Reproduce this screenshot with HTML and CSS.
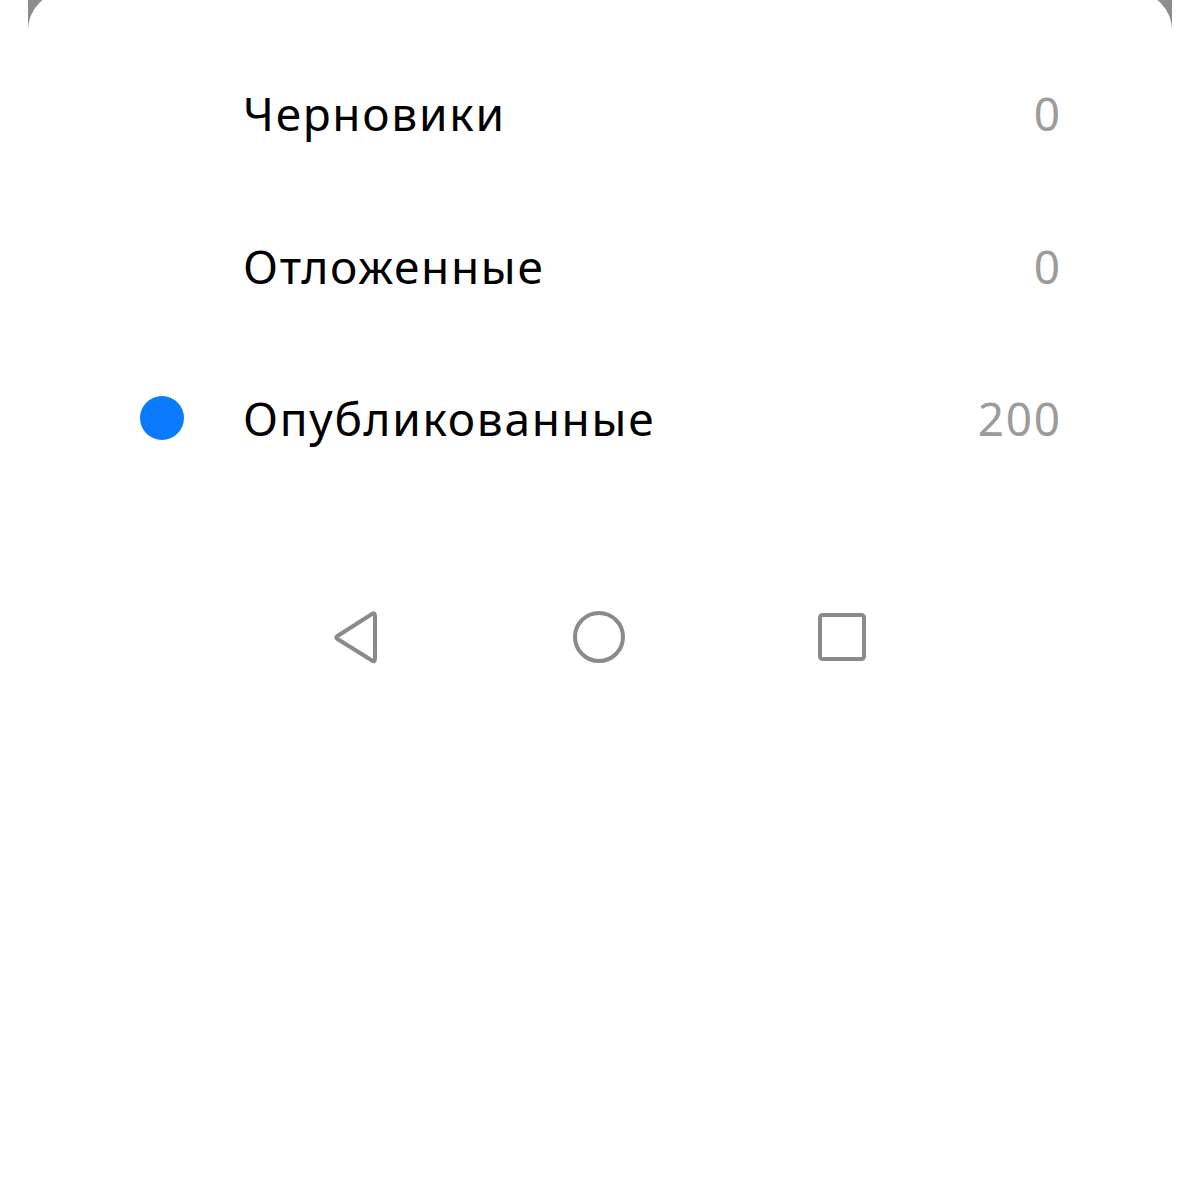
FILE: index.html
```html
<!DOCTYPE html>
<html lang="ru">
<head>
<meta charset="utf-8">
<link rel="stylesheet" href="styles.css">
</head>
<body>
<div class="frame">
  <div class="sheet">
    <ul class="list">
      <li class="row"><span class="mark"></span><span class="label">Черновики</span><span class="count">0</span></li>
      <li class="row"><span class="mark"></span><span class="label">Отложенные</span><span class="count">0</span></li>
      <li class="row"><span class="mark active"></span><span class="label">Опубликованные</span><span class="count">200</span></li>
    </ul>
    <nav class="navbar">
      <svg class="nav-icon" viewBox="0 0 60 60" width="60" height="60"><path d="M49 9 L49 52 Q49 55.5 46 53.5 L11.5 32 Q9 30.5 11.5 29 L46 7 Q49 5 49 9 Z" fill="none" stroke="#8a8a8a" stroke-width="4" stroke-linejoin="round"/></svg>
      <svg class="nav-icon" viewBox="0 0 60 60" width="60" height="60"><circle cx="30" cy="30" r="24" fill="none" stroke="#8a8a8a" stroke-width="4"/></svg>
      <svg class="nav-icon" viewBox="0 0 60 60" width="60" height="60"><rect x="8" y="8" width="44" height="44" rx="2.5" fill="none" stroke="#8a8a8a" stroke-width="4"/></svg>
    </nav>
  </div>
</div>
</body>
</html>
```
FILE: styles.css
```css
html, body {
  margin: 0;
  padding: 0;
  background: #ffffff;
}
body {
  font-family: "Noto Sans", "Open Sans", sans-serif;
}
.frame {
  margin: 0 28px;
  height: 1200px;
  background: #8e8e8e;
  overflow: hidden;
}
.sheet {
  margin-top: -8px;
  height: 1208px;
  background: #ffffff;
  border-radius: 38px 38px 0 0;
  box-sizing: border-box;
  padding-top: 45px;
}
.list {
  list-style: none;
  margin: 0;
  padding: 0 112px 0 112px;
}
.row {
  display: flex;
  align-items: center;
  height: 152.5px;
}
.mark {
  width: 44px;
  height: 44px;
  border-radius: 50%;
  flex: 0 0 44px;
  margin-right: 59px;
}
.mark.active {
  background: #0a7bff;
}
.label {
  flex: 1;
  font-size: 46px;
  letter-spacing: 1.7px;
  color: #000000;
}
.count {
  font-size: 46px;
  letter-spacing: 1.7px;
  margin-right: -1.7px;
  color: #9b9b9b;
}
.navbar {
  display: flex;
  justify-content: center;
  gap: 183px;
  margin-top: 112px;
  padding-right: 2px;
}
.nav-icon {
  display: block;
}
```
